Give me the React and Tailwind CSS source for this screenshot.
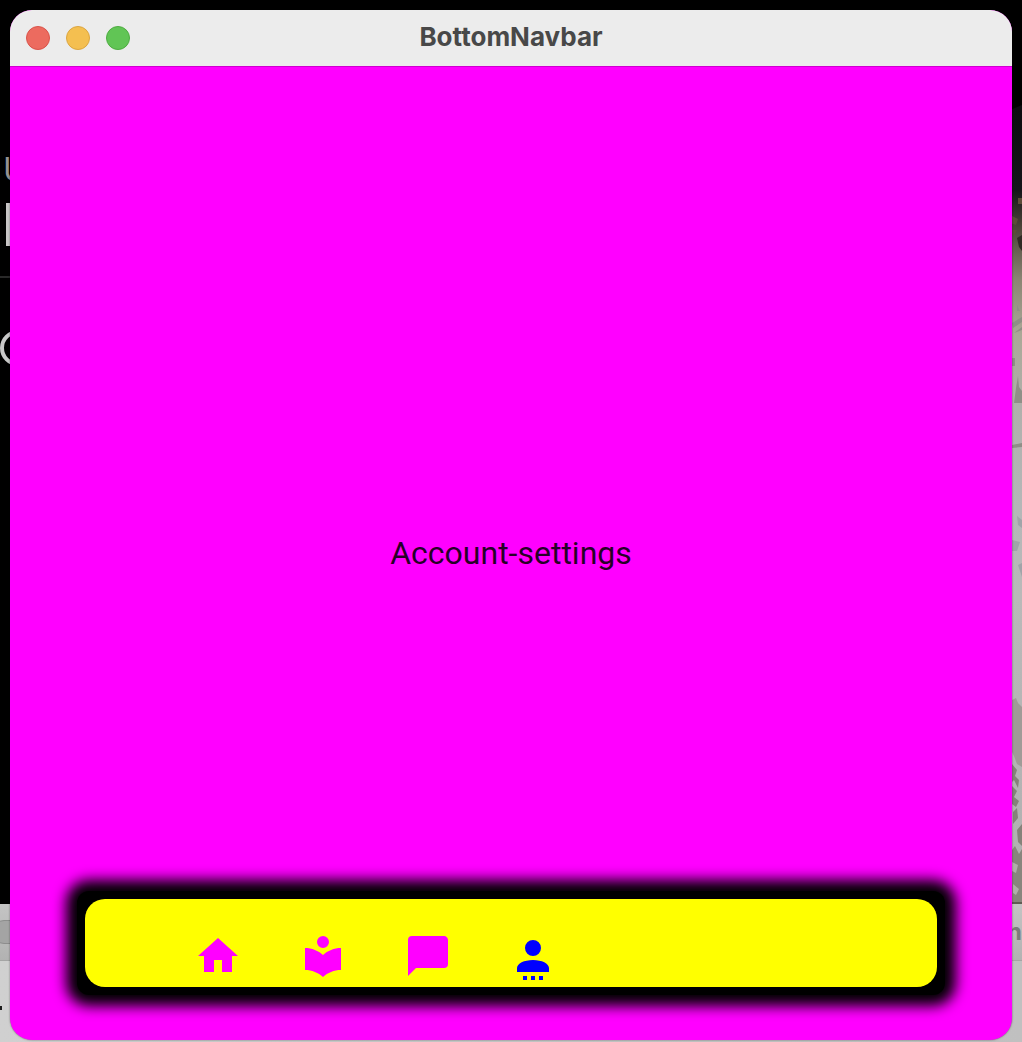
import React, { useState } from "react";

const tabs = [
  { id: "Home", d: "M10 20v-6h4v6h5v-8h3L12 3 2 12h3v8h5z" },
  {
    id: "Read",
    d: "M12 8A3 3 0 0 0 15 5A3 3 0 0 0 12 2A3 3 0 0 0 9 5A3 3 0 0 0 12 8M12 11.54C9.64 9.35 6.5 8 3 8V19C6.5 19 9.64 20.35 12 22.54C14.36 20.35 17.5 19 21 19V8C17.5 8 14.36 9.35 12 11.54Z",
  },
  {
    id: "Message",
    d: "M20 2H4A2 2 0 0 0 2 4V22L6 18H20A2 2 0 0 0 22 16V4C22 2.89 21.1 2 20 2Z",
  },
  {
    id: "Account-settings",
    d: "M12 4A4 4 0 0 1 16 8A4 4 0 0 1 12 12A4 4 0 0 1 8 8A4 4 0 0 1 12 4M12 14C16.42 14 20 15.79 20 18V20H4V18C4 15.79 7.58 14 12 14M7 22H9V24H7V22M11 22H13V24H11V22M15 22H17V24H15V22Z",
  },
];

/* Desktop behind the window: a dark page, a snowy photo and a light toolbar. */
function Desktop() {
  return (
    <div aria-hidden="true" className="absolute inset-0 flex flex-col overflow-hidden bg-black">
      <div className="flex h-[904px] justify-between">
        <div className="flex flex-col pt-[152px]">
          <span className="pl-[3px] font-['Inter',sans-serif] text-[32px] leading-9 text-[#969292]">U</span>
          <span className="mt-[15px] ml-[6px] h-[43px] w-[5px] bg-[#c8c6c6]" />
          <span className="mt-[30px] h-[2px] w-3 bg-[#292929]" />
          <svg className="mt-[52px] size-9" viewBox="0 0 36 36">
            <circle cx="18" cy="18" r="16" fill="none" stroke="#c9c9c9" strokeWidth="4" />
          </svg>
        </div>
        <svg className="h-full w-3" viewBox="0 0 12 904" preserveAspectRatio="none">
          <defs>
            <linearGradient id="photo" x1="0" y1="0" x2="0" y2="904" gradientUnits="userSpaceOnUse">
              <stop offset="0.12" stopColor="#0c0c10" />
              <stop offset="0.21" stopColor="#15151a" />
              <stop offset="0.25" stopColor="#4a4237" />
              <stop offset="0.31" stopColor="#8b8574" />
              <stop offset="0.37" stopColor="#aaa897" />
              <stop offset="0.45" stopColor="#b0b0ac" />
              <stop offset="0.56" stopColor="#b4b7b8" />
              <stop offset="0.66" stopColor="#b9b9b9" />
              <stop offset="1" stopColor="#b0b0b0" />
            </linearGradient>
          </defs>
          <path d="M0 110L12 105V904H0Z" fill="url(#photo)" />
          <path d="M8 198h4v6h-4zM2 216l6 3-2 6-6-2zM2 230h5l-2 5H2z" fill="#5c4c39" />
          <path d="M7 238l5-3v16l-3-4z" fill="#302a25" />
          <path d="M7 305l3 6h-3zM2 323l10-6v5l-9 6zM4 333l8-6v3zM2 358h3v8H2zM6 388l2-12 1 11 3 4v12H4zM2 445l10-2v4l-10 1z" fill="#8f8f87" />
          <path d="M7 516l5 4v8l-4-3zM2 540l8 2-3 9H2zM8 565l4-2v14z" fill="#a0a4a9" />
          <path d="M2 700l4-2 2 5 4 4v60l-5-3-3-8-2-4z" fill="#a09b97" />
          <path d="M2 764l5 6-2 6 4 4-1 8-4-8-2 2zM2 786l5 5-3 6 5 4-3 6-4-3zM3 812l4-4 1 10-5 6zM7 830l5-6v22l-4-4z" fill="#85827a" />
          <path d="M2 850l3-4 4 8 3-5v55H2z" fill="#88857d" />
          <path d="M2 862l6 3-2 8-4-2zM3 884l6 5-3 6-3-2z" fill="#b0aeaa" />
          <path d="M2 902h10v2H2z" fill="#605c54" />
        </svg>
      </div>
      <div className="flex h-[57px] items-center justify-between border-b border-[#a5a5a5] bg-linear-to-b from-[#c4c4c4] to-[#b2b2b2]">
        <span className="-ml-2 h-6 w-10 rounded-full border border-[#8d8d8d] bg-[#a4a4a4]" />
        <span className="font-['Inter',sans-serif] text-[24px] font-bold leading-9 text-[#7c7c7c]">n</span>
      </div>
      <div className="flex-1 bg-linear-to-r from-[#d0d0d0] to-[#c0c0c0] pt-[45px]">
        <div className="h-1 w-0.5 bg-[#1c1c1c]" />
      </div>
    </div>
  );
}

export default function App() {
  const [active, setActive] = useState("Account-settings");

  return (
    <div className="relative flex min-h-screen flex-col overflow-hidden px-2.5 pt-2.5 pb-0.5">
      <Desktop />
      <main className="relative flex flex-1 flex-col overflow-hidden rounded-[22px] bg-[#ff00ff] shadow-[0_0_2px_rgba(0,0,0,0.5)]">
        <header className="grid h-14 grid-cols-[1fr_auto_1fr] items-center bg-[#ececec] px-4">
          <div className="flex gap-4">
            <button aria-label="Close" className="size-6 rounded-full border border-[#d9534a] bg-[#ec6b5f]" />
            <button aria-label="Minimize" className="size-6 rounded-full border border-[#dba540] bg-[#f4bf50]" />
            <button aria-label="Zoom" className="size-6 rounded-full border border-[#4eac41] bg-[#61c555]" />
          </div>
          <h1 className="pb-0.5 font-['Inter',sans-serif] text-[26px] font-bold leading-8 text-[#484848]">BottomNavbar</h1>
        </header>

        <div className="grid flex-1 grid-cols-1 grid-rows-1 border-t border-[#d000d0]">
          <p className="col-start-1 row-start-1 place-self-center pb-0.5 font-['Roboto',sans-serif] text-[32px] leading-10 text-black/87">
            {active}
          </p>
          <div className="col-start-1 row-start-1 mx-[67px] mb-[45px] self-end rounded-xl bg-black p-2 shadow-[0_0_14px_11px_#000]">
            <nav aria-label="Bottom" className="flex h-[88px] items-end gap-[57px] rounded-[20px] bg-[#ffff00] pb-[7px] pl-[109px]">
              {tabs.map((tab) => (
                <button
                  key={tab.id}
                  aria-label={tab.id}
                  aria-current={active === tab.id ? "page" : undefined}
                  onClick={() => setActive(tab.id)}
                  className={active === tab.id ? "size-12 text-[#0000ff]" : "size-12 text-[#ff00ff]"}
                >
                  <svg viewBox="0 0 24 24" fill="currentColor" className="size-12">
                    <path d={tab.d} />
                  </svg>
                </button>
              ))}
            </nav>
          </div>
        </div>
      </main>
    </div>
  );
}
